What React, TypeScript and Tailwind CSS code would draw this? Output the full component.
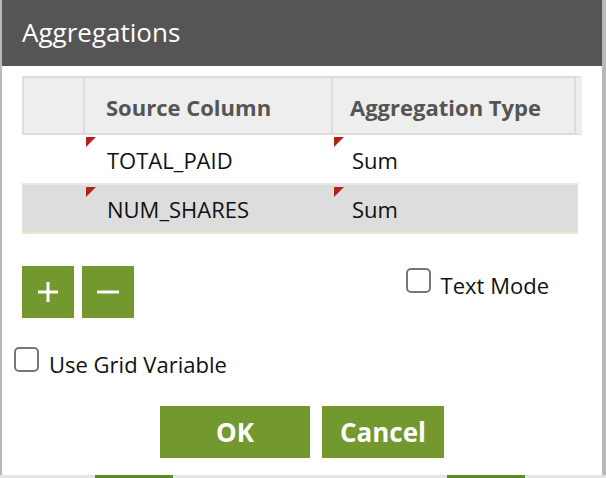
import { useState } from "react";

const rows = [
  { source: "TOTAL_PAID", type: "Sum" },
  { source: "NUM_SHARES", type: "Sum" },
];

function Flag() {
  return (
    <span className="absolute left-[1px] top-[2px] w-0 h-0 border-t-[10px] border-t-[#b3211b] border-r-[10px] border-r-transparent" />
  );
}

function Check({ label, checked, onChange }: { label: string; checked: boolean; onChange: (v: boolean) => void }) {
  return (
    <label className="flex items-start gap-[10px] cursor-pointer select-none">
      <span
        onClick={() => onChange(!checked)}
        className="w-[25px] h-[25px] rounded-[5px] border-2 border-[#777] bg-white"
      />
      <span className="mt-[5px] text-[22px] leading-[25px] text-[#111]">{label}</span>
    </label>
  );
}

export default function App() {
  const [textMode, setTextMode] = useState(false);
  const [gridVar, setGridVar] = useState(false);

  return (
    <div
      className="w-[606px] h-[478px] bg-[#b9b9b9] flex flex-col overflow-hidden"
      style={{ fontFamily: '"Open Sans", "Noto Sans", sans-serif' }}
    >
      <div className="ml-[2px] w-[600px] h-[475px] bg-white flex flex-col">
        <div className="h-[66px] bg-[#555555] flex items-center px-[20px] pb-[2px]">
          <h1 className="text-[26px] text-white">Aggregations</h1>
        </div>

        <div className="mt-[10px] ml-[20px] w-[560px]">
          <div className="h-[59px] flex bg-[#eeeeee] border-2 border-[#dddddd] border-r-[6px] border-r-[#eeeeee] text-[#555] font-bold text-[22px]">
            <div className="w-[61px] border-r-2 border-[#dddddd]" />
            <div className="w-[248px] border-r-2 border-[#dddddd] flex items-center pl-[21px] pt-[3px]">Source Column</div>
            <div className="flex-1 border-r-2 border-[#dddddd] flex items-center pl-[17px] pt-[3px]">Aggregation Type</div>
          </div>
          {rows.map((r, i) => (
            <div
              key={r.source}
              className={
                i % 2
                  ? "h-[51px] w-[556px] flex bg-[#dddddd] border-t-2 border-[#e8e8e8] border-b-2 border-b-[#e3efc3] text-[#111] text-[22px]"
                  : "h-[48px] w-[556px] flex bg-white text-[#111] text-[22px]"
              }
            >
              <div className="w-[63px]" />
              <div className="relative w-[248px] flex items-center pl-[22px] pt-[2px]">
                <Flag />
                {r.source}
              </div>
              <div className="relative flex-1 flex items-center pl-[19px] pt-[2px]">
                <Flag />
                {r.type}
              </div>
            </div>
          ))}
        </div>

        <div className="mt-[32px] ml-[20px] mr-[53px] flex items-start justify-between">
          <div className="flex gap-[8px]">
            <button className="w-[52px] h-[52px] bg-[#73982e] flex items-center justify-center">
              <svg width="22" height="22" viewBox="0 0 22 22">
                <path d="M11 1v20M1 11h20" stroke="#fff" strokeWidth="3" />
              </svg>
            </button>
            <button className="w-[52px] h-[52px] bg-[#73982e] flex items-center justify-center">
              <svg width="22" height="22" viewBox="0 0 22 22">
                <path d="M0 11h22" stroke="#fff" strokeWidth="3" />
              </svg>
            </button>
          </div>
          <div className="mt-[2px]">
            <Check label="Text Mode" checked={textMode} onChange={setTextMode} />
          </div>
        </div>

        <div className="mt-[29px] ml-[12px]">
          <Check label="Use Grid Variable" checked={gridVar} onChange={setGridVar} />
        </div>

        <div className="mt-[29px] flex justify-center gap-[12px]">
          <button className="w-[150px] h-[52px] bg-[#73982e] text-white font-bold text-[26px]">OK</button>
          <button className="w-[122px] h-[52px] bg-[#73982e] text-white font-bold text-[26px]">Cancel</button>
        </div>
      </div>
      <div className="h-[3px] flex bg-[#e4e4e4]">
        <div className="ml-[95px] w-[78px] bg-[#5e8a25]" />
        <div className="ml-[274px] w-[78px] bg-[#5e8a25]" />
      </div>
    </div>
  );
}
